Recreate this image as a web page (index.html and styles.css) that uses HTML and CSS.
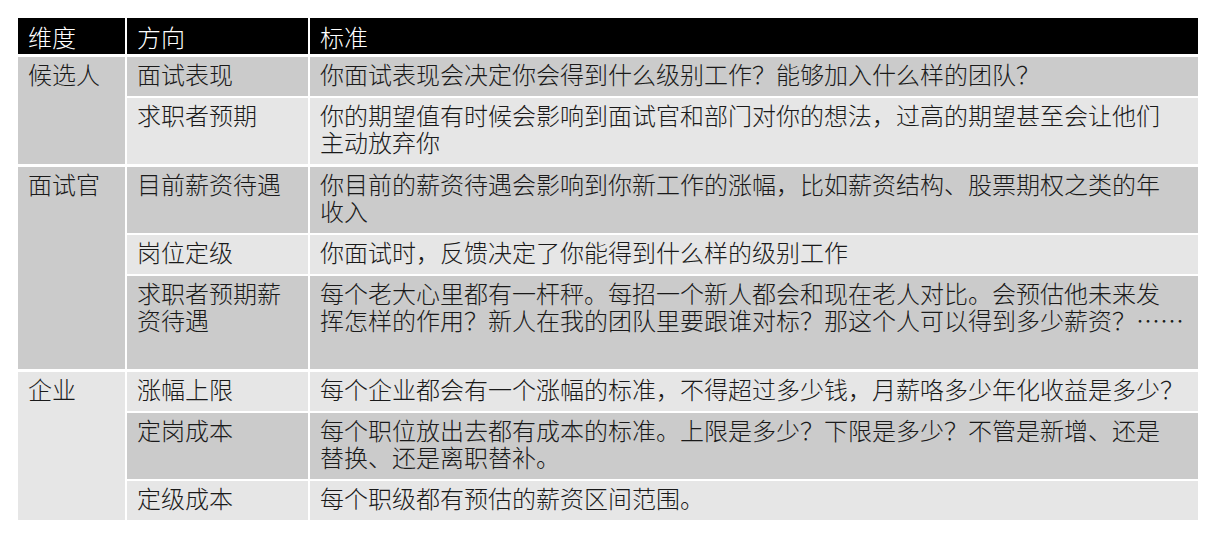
FILE: index.html
```html
<!DOCTYPE html>
<html lang="zh-CN">
<head>
<meta charset="utf-8">
<title>薪资影响因素</title>
<link rel="stylesheet" href="styles.css">
</head>
<body>
<div class="sheet">
  <div class="grid">
    <div class="cell head c1">维度</div>
    <div class="cell head c2">方向</div>
    <div class="cell head c3">标准</div>

    <div class="cell c1 dark span2 end">候选人</div>
    <div class="cell c2 dark">面试表现</div>
    <div class="cell c3 dark">你面试表现会决定你会得到什么级别工作？能够加入什么样的团队？</div>
    <div class="cell c2 light end">求职者预期</div>
    <div class="cell c3 light end"><span class="ln">你的期望值有时候会影响到面试官和部门对你的想法，过高的期望甚至会让他们</span><span class="ln">主动放弃你</span></div>

    <div class="cell c1 dark span3 end">面试官</div>
    <div class="cell c2 dark">目前薪资待遇</div>
    <div class="cell c3 dark"><span class="ln">你目前的薪资待遇会影响到你新工作的涨幅，比如薪资结构、股票期权之类的年</span><span class="ln">收入</span></div>
    <div class="cell c2 light">岗位定级</div>
    <div class="cell c3 light">你面试时，反馈决定了你能得到什么样的级别工作</div>
    <div class="cell c2 dark end"><span class="ln">求职者预期薪</span><span class="ln">资待遇</span></div>
    <div class="cell c3 dark end tall"><span class="ln">每个老大心里都有一杆秤。每招一个新人都会和现在老人对比。会预估他未来发</span><span class="ln">挥怎样的作用？新人在我的团队里要跟谁对标？那这个人可以得到多少薪资？……</span></div>

    <div class="cell c1 light span3">企业</div>
    <div class="cell c2 light">涨幅上限</div>
    <div class="cell c3 light">每个企业都会有一个涨幅的标准，不得超过多少钱，月薪咯多少年化收益是多少？</div>
    <div class="cell c2 dark">定岗成本</div>
    <div class="cell c3 dark"><span class="ln">每个职位放出去都有成本的标准。上限是多少？下限是多少？不管是新增、还是</span><span class="ln">替换、还是离职替补。</span></div>
    <div class="cell c2 light">定级成本</div>
    <div class="cell c3 light">每个职级都有预估的薪资区间范围。</div>
  </div>
</div>
</body>
</html>
```

FILE: styles.css
```css
html, body {
  margin: 0;
  padding: 0;
  background: #ffffff;
}

.sheet {
  padding: 18px 0 0 18px;
}

.grid {
  width: 1180px;
  display: grid;
  grid-template-columns: 107px 181px 1fr;
  column-gap: 2px;
  row-gap: 2px;
  font-family: "Noto Sans CJK SC", "Noto Sans", sans-serif;
  font-size: 24px;
  font-weight: 300;
  line-height: 27px;
  color: #1a1a1a;
}

.cell {
  padding: 3px 6px 9px 10px;
  white-space: nowrap;
}

.ln {
  display: block;
  height: 27px;
}

.c1 { grid-column: 1; }
.c2 { grid-column: 2; }
.c3 { grid-column: 3; }

.head {
  background: #000000;
  color: #ffffff;
  padding-top: 5px;
  padding-bottom: 4px;
  margin-bottom: 1px;
}

.dark { background: #cbcbcb; }
.light { background: #e6e6e6; }

.span2 { grid-row: span 2; }
.span3 { grid-row: span 3; }

.end { margin-bottom: 1px; }

.tall { padding-bottom: 36px; }
```
